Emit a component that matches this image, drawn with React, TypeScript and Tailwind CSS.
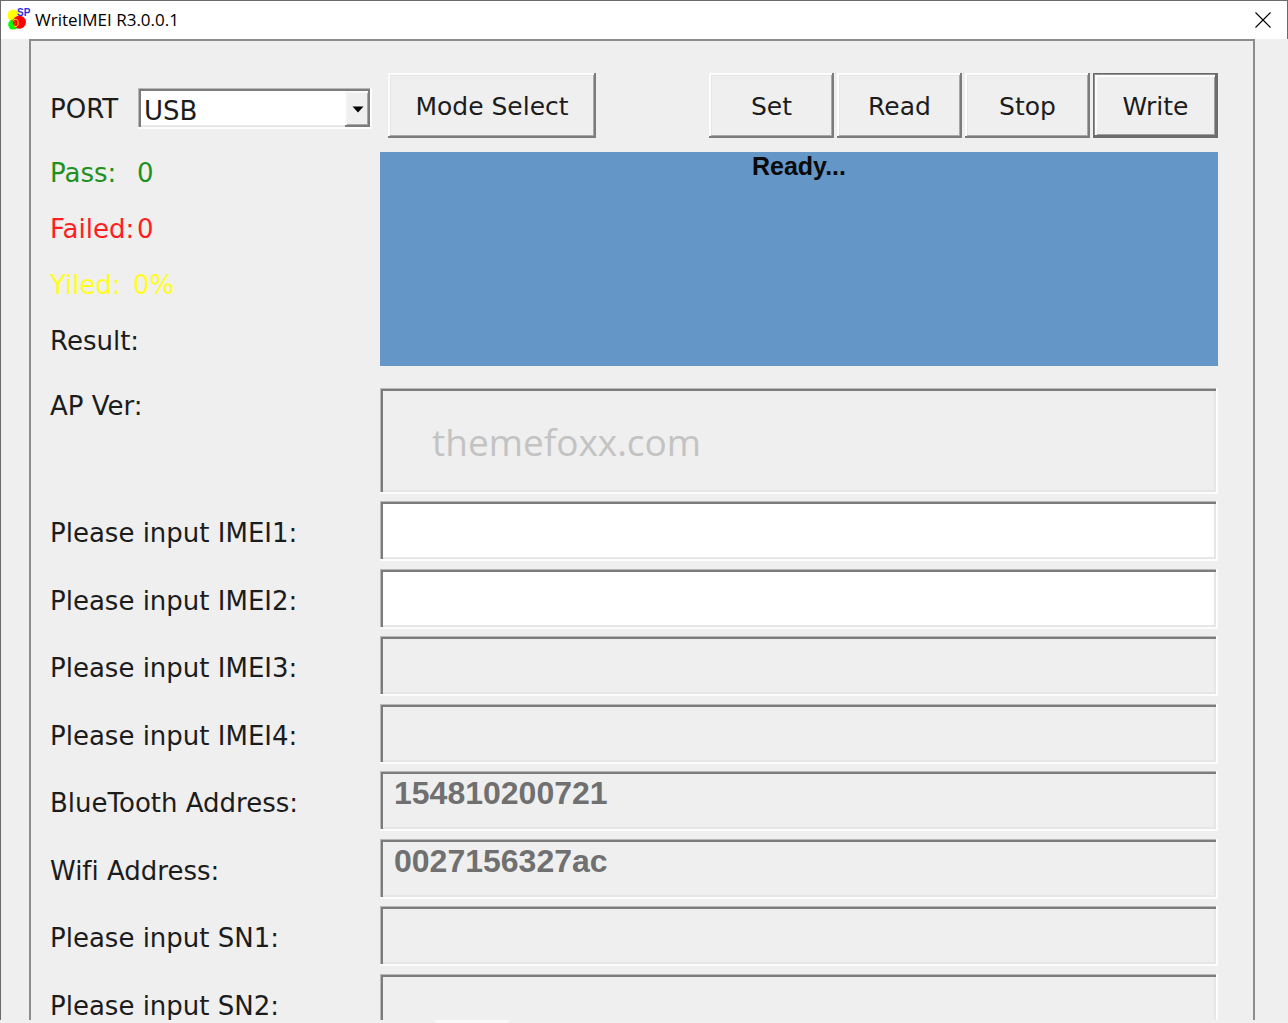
import React from "react";

const sunken =
  "shadow-[inset_-2px_-2px_#fcfcfc,inset_1px_1px_#b8b8b8,inset_3px_3px_#7c7c7c,inset_-4px_-4px_#e6e6e6]";

function SpLogo() {
  return (
    <svg width="26" height="26" viewBox="0 0 26 26" aria-hidden="true" className="shrink-0">
      <circle cx="6.5" cy="8.6" r="6" fill="#ffff00" />
      <circle cx="6.2" cy="17.6" r="5" fill="#00ff00" />
      <circle cx="12.4" cy="15.2" r="6.5" fill="#ff0000" />
      <path d="M6 14 C7 12 9.5 12 11 13.5 V18 C10 20 8 20 7 18.5" stroke="#ffff00" strokeWidth="1" fill="none" />
      <path d="M4 14.5 C6 13 8 14 8.5 16.5 L6 18" stroke="#ff5000" strokeWidth="1" fill="none" />
      <text x="10" y="9" fontFamily="Liberation Sans, sans-serif" fontWeight="700" fontSize="10" fill="#3030e0">
        SP
      </text>
    </svg>
  );
}

function ToolButton({ children, className }: { children: React.ReactNode; className: string }) {
  return (
    <button
      type="button"
      className={
        "h-[65px] bg-[#efefef] pt-0.5 text-center shadow-[inset_-2px_-2px_#7c7c7c,inset_2px_2px_#fcfcfc,inset_-3px_-3px_#a8a8a8,inset_3px_3px_#e6e6e6] " +
        className
      }
    >
      {children}
    </button>
  );
}

type FieldProps = { id: string; label: string; enabled?: boolean; value?: string };

function Field({ id, label, enabled = false, value = "" }: FieldProps) {
  return (
    <div className="flex items-center">
      <label htmlFor={id} className="w-[330px] shrink-0 pt-1 text-[26px] whitespace-nowrap">
        {label}
      </label>
      <input
        id={id}
        type="text"
        defaultValue={value}
        disabled={!enabled}
        className={
          "h-[60px] min-w-0 flex-1 px-3.5 pb-4 font-['Liberation_Sans',sans-serif] text-[32px] font-bold text-[#707070] outline-none " +
          (enabled ? "bg-white " : "bg-[#efefef] ") +
          sunken
        }
      />
    </div>
  );
}

const groups: FieldProps[][] = [
  [
    { id: "imei1", label: "Please input IMEI1:", enabled: true },
    { id: "imei2", label: "Please input IMEI2:", enabled: true },
  ],
  [
    { id: "imei3", label: "Please input IMEI3:" },
    { id: "imei4", label: "Please input IMEI4:" },
  ],
  [
    { id: "bt", label: "BlueTooth Address:", value: "154810200721" },
    { id: "wifi", label: "Wifi Address:", value: "0027156327ac" },
  ],
  [
    { id: "sn1", label: "Please input SN1:" },
    { id: "sn2", label: "Please input SN2:" },
  ],
];

export default function App() {
  return (
    <div className="flex h-screen flex-col overflow-hidden bg-[#efefef] font-['DejaVu_Sans',Verdana,sans-serif] text-[25px] leading-8 text-[#1c1c1c] [font-variant-ligatures:none]">
      <header className="flex h-[39px] shrink-0 items-center border-x border-t border-[#6b6b6b] bg-white pr-4 pl-1.5">
        <SpLogo />
        <h1 className="ml-0.5 flex-1 font-['Open_Sans',sans-serif] text-[17px] leading-6 text-black">
          WriteIMEI R3.0.0.1
        </h1>
        <button type="button" aria-label="Close" className="flex size-4 items-center justify-center">
          <svg width="16" height="16" viewBox="0 0 16 16" stroke="#000" strokeWidth="1.1" fill="none">
            <path d="M0.5 0.5 L15.5 15.5 M15.5 0.5 L0.5 15.5" />
          </svg>
        </button>
      </header>

      <div className="flex min-h-0 flex-1 overflow-hidden border-l border-[#6b6b6b] pr-[33px] pl-7">
        <main className="flex h-max min-w-0 flex-1 flex-col border-x-2 border-t-2 border-[#8c8c8c] pt-8 pr-[35px] pl-[19px]">
          <div className="flex items-start">
            <div className="flex items-center pt-[15px]">
              <label htmlFor="port" className="w-[88px] text-[26px]">
                PORT
              </label>
              <div className="relative w-[234px]">
                <select
                  id="port"
                  className={"h-[41px] w-full appearance-none bg-white pt-1 pl-1.5 text-[26px] outline-none " + sunken}
                >
                  <option>USB</option>
                </select>
                <span className="pointer-events-none absolute top-[3px] right-[2px] flex h-9 w-[25px] items-center justify-center bg-[#efefef] shadow-[inset_-2px_-2px_#7c7c7c,inset_2px_2px_#f8f8f8,inset_-3px_-3px_#a8a8a8]">
                  <svg width="12" height="7" viewBox="0 0 12 7" aria-hidden="true">
                    <path d="M0.5 0.5 H11.5 L6 6.5 Z" fill="#000" />
                  </svg>
                </span>
              </div>
            </div>
            <ToolButton className="ml-4 w-52">Mode Select</ToolButton>
            <div className="ml-auto flex gap-[3px]">
              <ToolButton className="w-[125px]">Set</ToolButton>
              <ToolButton className="w-[125px]">Read</ToolButton>
              <ToolButton className="w-[125px]">Stop</ToolButton>
              <button
                type="button"
                className="h-[65px] w-[125px] bg-[#efefef] pt-0.5 text-center shadow-[inset_0_0_0_1px_#6c6c6c,inset_-3px_-3px_#6c6c6c,inset_2px_2px_#909090,inset_4px_4px_#fcfcfc,inset_-4px_-4px_#a0a0a0]"
              >
                Write
              </button>
            </div>
          </div>

          <section className="mt-3.5 flex">
            <div className="flex w-[330px] shrink-0 flex-col gap-6 pt-[5px] text-[26px] whitespace-pre">
              <p className="flex text-[#1e9120]">
                <span className="w-[87px]">Pass:</span>
                <span>0</span>
              </p>
              <p className="flex text-[#ff1e1e]">
                <span className="w-[87px]">Failed:</span>
                <span>0</span>
              </p>
              <p className="flex text-[#ffff1e]">
                <span className="w-[83px]">Yiled:</span>
                <span>0%</span>
              </p>
              <p>Result:</p>
            </div>
            <div className="h-[214px] flex-1 bg-[#6496c8] text-center font-['Liberation_Sans',sans-serif] text-[25px] leading-7 font-bold text-[#0a0a0a]">
              Ready...
            </div>
          </section>

          <div className="mt-[22px] flex">
            <label htmlFor="apver" className="w-[330px] shrink-0 pt-0.5 text-[26px]">
              AP Ver:
            </label>
            <div className="relative flex-1">
              <textarea
                id="apver"
                disabled
                className={"block h-[106px] w-full resize-none bg-[#efefef] outline-none " + sunken}
              />
              <span className="pointer-events-none absolute inset-0 flex items-center pt-0.5 pl-[52px] font-['Open_Sans',sans-serif] text-[37px] text-[#c3c3c3]">
                themefoxx.com
              </span>
            </div>
          </div>

          <form className="mt-[7px] flex flex-col gap-[7px]">
            {groups.map((group) => (
              <div key={group[0].id} className="flex flex-col gap-2">
                {group.map((field) => (
                  <Field key={field.id} {...field} />
                ))}
              </div>
            ))}
          </form>
        </main>
      </div>

      <footer className="h-[3px] shrink-0 bg-[#f0f0f0] pl-[435px]">
        <div className="h-full w-[74px] bg-[#f9f9f9]" />
      </footer>
    </div>
  );
}
